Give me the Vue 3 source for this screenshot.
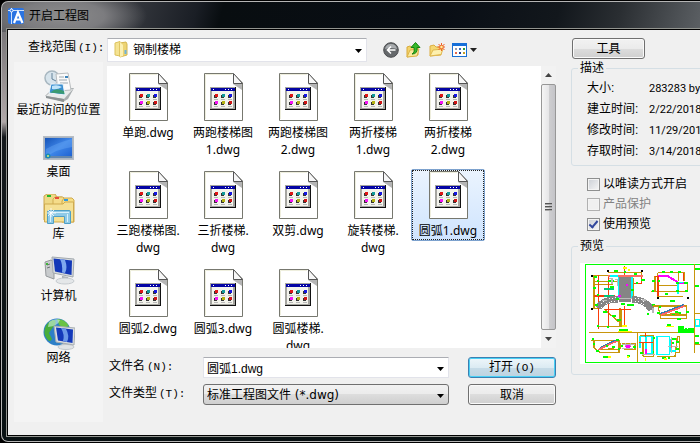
<script setup>
import {ref} from "vue";

const folder = ref("钢制楼梯");
const fileName = ref("圆弧1.dwg");
const fileType = ref("标准工程图文件 (*.dwg)");
const selected = ref("圆弧1.dwg");

const places = [
  {icon: "recent", name: "最近访问的位置"},
  {icon: "desktop", name: "桌面"},
  {icon: "library", name: "库"},
  {icon: "computer", name: "计算机"},
  {icon: "network", name: "网络"}
]

// each file name is split in the lines that fit under its icon
const files = [
  ["单跑.dwg"],
  ["两跑楼梯图", "1.dwg"],
  ["两跑楼梯图", "2.dwg"],
  ["两折楼梯", "1.dwg"],
  ["两折楼梯", "2.dwg"],
  ["三跑楼梯图.", "dwg"],
  ["三折楼梯.", "dwg"],
  ["双剪.dwg"],
  ["旋转楼梯.", "dwg"],
  ["圆弧1.dwg"],
  ["圆弧2.dwg"],
  ["圆弧3.dwg"],
  ["圆弧楼梯.", "dwg"]
]

const details = [
  {label: "大小:", value: "283283 bytes"},
  {label: "建立时间:", value: "2/22/2018"},
  {label: "修改时间:", value: "11/29/2017"},
  {label: "存取时间:", value: "3/14/2018"}
]

const readOnly = ref(false);
const usePreview = ref(true);

function selectFile(file) {
  selected.value = file.join("");
  fileName.value = selected.value;
}
</script>

<template>
  <div class="window">
    <header class="title-bar">
      <svg class="app-icon" width="16" height="16" viewBox="0 0 16 16">
        <rect width="16" height="16" rx="2" fill="#2b74e2"/>
        <path d="M0 2.500H16M3.500 0V16" stroke="#cfe2fb"/>
        <circle cx="3.500" cy="2.500" r="1.500" fill="#2b74e2" stroke="#fff"/>
        <path d="M6 15L10 4.500L14.500 15M7.500 11.500H13" stroke="#fff" stroke-width="2.200" fill="none"/>
      </svg>
      <h1>开启工程图</h1>
    </header>

    <main class="body">
      <div class="look-in">
        <label for="folder">查找范围<span class="half">(I):</span></label>
        <div class="field folder-field">
          <svg class="folder-icon" width="14" height="17" viewBox="0 0 14 17">
            <path d="M1 2L6 0.500V15L1 14Z" fill="#f5e392" stroke="#dcc25c"/>
            <path d="M6 2L12 1L13 3V14L6 16Z" fill="#edd474" stroke="#d4b650"/>
            <path d="M6 1V16L9 15V4Z" fill="#fbf0b4"/>
            <path d="M11.500 9V13" stroke="#6eb4dc" stroke-width="2"/>
          </svg>
          <select id="folder" v-model="folder">
            <option>钢制楼梯</option>
          </select>
          <svg class="arrow" width="7" height="4" viewBox="0 0 7 4"><path d="M0 0H7L3.500 4Z"/></svg>
        </div>
        <div class="tools">
          <button aria-label="后退">
            <svg width="16" height="16" viewBox="0 0 16 16">
              <circle cx="8" cy="8" r="7.300" fill="#65686b" stroke="#4c4e50"/>
              <path d="M2 7Q3 2 8 2T14 7Q8 5 2 7Z" fill="#a9acaf"/>
              <path d="M12.500 8H4.500M8 4.500L4.500 8L8 11.500" stroke="#fff" stroke-width="1.600" fill="none"/>
            </svg>
          </button>
          <button aria-label="向上">
            <svg width="16" height="16" viewBox="0 0 16 16">
              <path d="M1 15V5L4 4L6 5.500H12V13Z" fill="#f3d36a" stroke="#d9aa3b"/>
              <path d="M1 15L4 8L13 7L11 14Z" fill="#fbe99c" stroke="#dcb349"/>
              <path d="M6 12Q9 11 8 5.500H5L9.500 0.500L14 5.500H11Q12 12 6 12Z" fill="#35b829" stroke="#15800f"/>
            </svg>
          </button>
          <button aria-label="新建文件夹">
            <svg width="16" height="16" viewBox="0 0 16 16">
              <path d="M1 14V4L5 3L7 5H12V13Z" fill="#f5d873" stroke="#dcae43"/>
              <path d="M1 14L4 8L14 7L12 12.500Z" fill="#fdf0ae" stroke="#dfb850"/>
              <path d="M12.500 1V9M8.500 5H16M9.500 2L15.500 8M15.500 2L9.500 8" stroke="#f0612b"/>
              <circle cx="12.500" cy="5" r="1.800" fill="#fff0a0" stroke="#ef6b2b"/>
            </svg>
          </button>
          <button class="view-button" aria-label="视图">
            <svg width="26" height="16" viewBox="0 0 26 16">
              <rect x="0.500" y="1.500" width="14" height="13" fill="#fff" stroke="#1a70d2"/>
              <path d="M0 1H15V4H0Z" fill="#176fd8"/>
              <path d="M3 6h2v2h-2z" fill="#99a"/>
              <path d="M7 6h2v2h-2z" fill="#3c6cba"/>
              <path d="M11 6h2v2h-2z" fill="#2a9b3c"/>
              <path d="M3 10h2v2h-2z" fill="#e66a4c"/>
              <path d="M7 10h2v2h-2z" fill="#1b3f94"/>
              <path d="M11 10h2v2h-2z" fill="#c7a021"/>
              <path d="M18 6H25L21.500 10Z" fill="#222"/>
            </svg>
          </button>
        </div>
      </div>

      <nav class="places">
        <button v-for="place in places" :key="place.icon">
          <svg width="32" height="32" viewBox="0 0 32 32">
            <g v-if="place.icon === 'recent'">
              <path d="M2 26L9 19L31 18L25 29L20 32Z" fill="#a9aeb0"/>
              <path d="M3 26L9 20L30 19L21 29Z" fill="#e9ebeb"/>
              <path d="M3 26L21 29V32L3 28Z" fill="#8d9294"/>
              <circle cx="9" cy="8" r="7" fill="#d7e4ec" stroke="#a8b7c0" stroke-width="1.500"/>
              <path d="M9 3V9L13 11" stroke="#64839a" fill="none"/>
              <path d="M13 4L25 3L28 20L15 21Z" fill="#fafafa" stroke="#b9bdbf"/>
              <path d="M16 7H21M16 10H24M17 13H25" stroke="#9da9b0"/>
              <path d="M22 7h3" stroke="#3c83b9" stroke-width="2"/>
              <path d="M8 14L20 14L22 25L6 23Z" fill="#3b8fd0" stroke="#eef5f9"/>
              <path d="M8 22Q13 17 21 21L21.500 24L7 22.500Z" fill="#3a9a71"/>
              <path d="M9 16Q14 14 19 17Q14 20 9 19Z" fill="#bfe4fa"/>
            </g>
            <g v-else-if="place.icon === 'desktop'">
              <defs>
                <linearGradient id="desk" x2="1" y2="1">
                  <stop offset="0" stop-color="#1654b8"/>
                  <stop offset=".5" stop-color="#3f86e8"/>
                  <stop offset="1" stop-color="#1c5fd0"/>
                </linearGradient>
              </defs>
              <rect x="0.500" y="4.500" width="30" height="23" fill="#a9b4c2" stroke="#b7bdc4"/>
              <rect x="2" y="6" width="27" height="20" fill="url(#desk)"/>
              <path d="M3 17Q16 10 29 7V15Q14 17 3 25Z" fill="#6baaf5" opacity=".4"/>
              <path d="M2 24H29V26H2Z" fill="#6386ad"/>
              <circle cx="5" cy="24" r="2.500" fill="#188bb3"/>
              <circle cx="5" cy="24" r="1" fill="#d9ed75"/>
            </g>
            <g v-else-if="place.icon === 'library'">
              <path d="M1 26V2L4 0H12L14 3H19V27Z" fill="#eed886" stroke="#c9a64f"/>
              <path d="M10 27V5L12 3H20L22 5H25V28Z" fill="#f5dc8a" stroke="#d1ac52"/>
              <path d="M19 28V7L21 4H29L31 6V28Z" fill="#f6dd83" stroke="#cfaa4e"/>
              <path d="M4 2h4" stroke="#25b92d" stroke-width="2"/>
              <path d="M12 4h4" stroke="#e84b37" stroke-width="2"/>
              <path d="M21 6h4" stroke="#329be0" stroke-width="2"/>
              <path d="M1.500 10H20L22 8H30.500V28H1.500Z" fill="#f5e094" stroke="#cfaa4e"/>
              <path d="M4.500 29.500V18Q4.500 16.500 6 16.500H26Q27.500 16.500 27.500 18V29.500H21.500V22.500H10.500V29.500Z" fill="#8fcae6" stroke="#4f9fc6"/>
              <path d="M7 18.500H26M7.500 20V28M24.500 20V28" stroke="#d8f1fb"/>
              <path d="M8 14V23M4 19H13M5 16L11 22M11 16L5 22" stroke="#fff" stroke-width=".8"/>
            </g>
            <g v-else-if="place.icon === 'computer'">
              <path d="M2 6L8 4L11 6V23L3 20Z" fill="#c8cbcd" stroke="#95999c"/>
              <path d="M4 9L7 8M4 12L7 11" stroke="#6c7174"/>
              <path d="M3 8h2" stroke="#3fb438" stroke-width="2"/>
              <path d="M19 20L25 21L26 25H19Z" fill="#a4abb0"/>
              <ellipse cx="22" cy="25" rx="9" ry="3" fill="#e4e7e9" stroke="#c6cbcf"/>
              <path d="M9 1L31 3L30 21L10 17Z" fill="#d6dadd" stroke="#a2a9ae"/>
              <path d="M10.500 2.500L29 4.500L28.500 19L12 15.500Z" fill="#1338b8"/>
              <path d="M17 3L22 4Q25 12 22 17L19 16.500Q20 9 17 3Z" fill="#7ea7ed"/>
            </g>
            <g v-else>
              <circle cx="14" cy="14" r="13.500" fill="#2d7fc7"/>
              <path d="M2 10Q5 2 12 2Q14 6 10 9L6 15L9 21Q7 25 4 21Q0 16 2 10Z" fill="#48ad3b"/>
              <path d="M14 1Q22 1 26 8L21 10L16 7Z" fill="#69c245"/>
              <path d="M6 4Q11 0 17 2Q15 8 5 9Z" fill="#d5f4e5" opacity=".6"/>
              <path d="M20 25H26V29H20Z" fill="#a4abb0"/>
              <ellipse cx="23" cy="29" rx="8" ry="2.500" fill="#e1e4e6" stroke="#c2c7cb"/>
              <path d="M11 8L32 10L31 27L13 24Z" fill="#dadee0" stroke="#a7adb1"/>
              <path d="M13 9.500L30 11.500L29.500 25L15 22.500Z" fill="#1439ba"/>
              <path d="M18 10L23 11Q27 18 24 24L20 23Q22 17 18 10Z" fill="#6c98e8"/>
            </g>
          </svg>
          <span>{{ place.name }}</span>
        </button>
      </nav>

      <section class="center">
        <div class="file-pane">
          <div class="files">
            <button v-for="file in files" :key="file.join('')"
                    :class="file.join('') === selected ? 'file file-selected' : 'file'" @click="selectFile(file)">
              <svg width="39" height="48" viewBox="0 0 39 48">
                <path d="M0.500 0.500H29L38.500 10V47.500H0.500Z" fill="#fff" stroke="#77786f"/>
                <path d="M1.500 46V1.500H28" fill="none" stroke="#eeeedd"/>
                <path d="M29 11H38V17Z" fill="#b5b5b5"/>
                <path d="M29.500 0.500V10.500H38.500Z" fill="#f7f7f7" stroke="#555"/>
                <rect x="6" y="14" width="26" height="23" fill="#111"/>
                <rect x="6" y="14" width="25" height="22" fill="#a5a5a0"/>
                <rect x="8" y="18" width="21" height="17" fill="#f3f3ec"/>
                <rect x="7" y="15" width="24" height="3" fill="#0404a4"/>
                <path d="M9 16.500h1M21 16.500h1M24 16.500h1M27 16.500h1" stroke="#fff"/>
                <path d="M10 26.500h4M17 26.500h4M24 26.500h4M10 33.500h4M17 33.500h4M24 33.500h4" stroke="#b7b7b7"/>
                <path d="M10 22h3v3h-3zM17 22h3v3h-3zM24 22h3v3h-3zM10 29h3v3h-3zM17 29h3v3h-3zM24 29h3v3h-3z" fill="#333"/>
                <path d="M11 21h3v3h-3z" fill="#df1616"/>
                <path d="M18 21h3v3h-3z" fill="#129a9a"/>
                <path d="M25 21h3v3h-3z" fill="#1616df"/>
                <path d="M11 28h3v3h-3z" fill="#f316f3"/>
                <path d="M18 28h3v3h-3z" fill="#b3b312"/>
                <path d="M25 28h3v3h-3z" fill="#cd1616"/>
              </svg>
              <span v-for="line in file">{{ line }}</span>
            </button>
          </div>
          <div class="scroll-bar">
            <svg width="7" height="4" viewBox="0 0 7 4"><path d="M0 4H7L3.500 0Z"/></svg>
            <div class="thumb"><i></i><i></i><i></i></div>
            <svg width="7" height="4" viewBox="0 0 7 4"><path d="M0 0H7L3.500 4Z"/></svg>
          </div>
        </div>

        <form class="file-form" @submit.prevent>
          <label for="file-name">文件名<span class="half">(N):</span></label>
          <div class="field">
            <input id="file-name" type="text" v-model="fileName">
            <svg class="arrow" width="7" height="4" viewBox="0 0 7 4"><path d="M0 0H7L3.500 4Z"/></svg>
          </div>
          <button class="push push-default">打开<span class="half">(O)</span></button>
          <label for="file-type">文件类型<span class="half">(T):</span></label>
          <div class="field type-field">
            <select id="file-type" v-model="fileType">
              <option>标准工程图文件 (*.dwg)</option>
            </select>
            <svg class="arrow" width="7" height="4" viewBox="0 0 7 4"><path d="M0 0H7L3.500 4Z"/></svg>
          </div>
          <button class="push" type="button">取消</button>
        </form>
      </section>

      <aside class="side">
        <button class="push tool-button">工具</button>
        <fieldset>
          <legend>描述</legend>
          <dl>
            <div v-for="detail in details" :key="detail.label">
              <dt>{{ detail.label }}</dt>
              <dd>{{ detail.value }}</dd>
            </div>
          </dl>
        </fieldset>
        <div class="options">
          <label><input type="checkbox" v-model="readOnly">以唯读方式开启</label>
          <label class="disabled"><input type="checkbox" disabled>产品保护</label>
          <label><input type="checkbox" v-model="usePreview">使用预览</label>
        </div>
        <fieldset class="preview">
          <legend>预览</legend>
          <svg width="180" height="101" viewBox="0 0 180 101" shape-rendering="crispEdges">
            <rect width="180" height="101" fill="#fff"/>
            <!-- drawing is laid out on a grid three times finer than the pixels -->
            <g transform="translate(-5 -7) scale(.3333)" fill="none" stroke-width="4">
              <path d="M540 25H31V319H540" stroke="#0f0" stroke-width="3"/>
              <path d="M42 230H358M187 230V319M358 25V290M358 172H400M358 265H400" stroke="#c8960c"/>
              <!-- main stair plan -->
              <path d="M55 58H130M57 58V158H70M57 76H130M57 85H115M99 50H200V60M70 211H140V160M88 160L140 205M175 65V130M135 155V213" stroke="#c8960c"/>
              <path d="M71 58V218M100 58V216M149 30V60M149 150V213M57 120H120M90 160H168M178 82H200M200 60V80" stroke="#fa3c0a"/>
              <path d="M98 60H203" stroke="#ff6e64" stroke-width="6"/>
              <path d="M131 62V130M171 62V130M130 60H106" stroke="#0ff"/>
              <path d="M86 98H118M86 120H118" stroke="#00c878" stroke-width="6"/>
              <rect x="133" y="62" width="36" height="76" fill="#858585"/>
              <path d="M130 130Q90 128 68 155" stroke="#858585" stroke-width="20"/>
              <path d="M172 130Q210 130 230 161" stroke="#858585" stroke-width="20"/>
              <path d="M122 126Q94 127 72 148M180 126Q205 129 226 154" stroke="#fff" stroke-width="3" stroke-dasharray="3 6"/>
              <path d="M121 135Q97 137 76 158M181 135Q202 138 222 162" stroke="#fff" stroke-width="3" stroke-dasharray="3 6"/>
              <path d="M133 127H171" stroke="#bbb"/>
              <path d="M130 121h7M154 87h5" stroke="#f0f" stroke-width="5"/>
              <path d="M48 59h6M96 45h6M198 45h6M48 158h6M246 125h6M336 125h6" stroke="#000" stroke-width="6"/>
              <path d="M57 62h9M54 95h8M66 76h7M66 116h7M60 147h8M98 75h18M105 92h12M118 44h12M146 49h8M177 53h10M199 71h12M184 82h6M168 103h8M85 168h10M110 180h12M125 191h12M65 210h8M95 213h8M124 128h9M138 144h12M155 148h22M231 148h8M215 175h8" stroke="#0f0" stroke-width="6"/>
              <path d="M102 68h9v16M119 70h8v20M82 133h15M201 132h12M234 155v17" stroke="#b9b9b9"/>
              <path d="M144 35h12M158 42h8M142 210h14" stroke="#ff0" stroke-width="6"/>
              <path d="M132 222h28" stroke="#0f0" stroke-width="6"/>
              <path d="M130 227h40M272 211h24" stroke="#ff0"/>
              <!-- section and elevation -->
              <path d="M248 50H327V76M248 50V122H325M240 60V106M227 106H338V77M250 88H308M235 150H334V188H258L249 150M262 177H334M310 48V75" stroke="#c8960c"/>
              <path d="M248 61H280L313 82H328" stroke="#f0f" stroke-width="6"/>
              <path d="M249 62V120M240 62H252M326 52V76" stroke="#fa3c0a"/>
              <path d="M309 79V113M309 80H323" stroke="#0ff"/>
              <path d="M256 173L326 146" stroke="#347caf"/>
              <path d="M258 177L328 150" stroke="#ff6464" stroke-width="5"/>
              <path d="M260 48h10M285 48h8M310 48h8M231 76h8M230 104h7M250 76h6M303 81h8M328 80h12M270 114h10M303 104h8M330 104h8M285 135h15M252 154h6M247 172h7M300 168h8M292 173h8M309 170h8M305 188h12M276 207h12M334 167h7" stroke="#0f0" stroke-width="6"/>
              <path d="M285 173H312" stroke="#c8960c" stroke-width="5"/>
              <path d="M310 210H326V215H358V230H310Z" fill="#0f0"/>
              <path d="M328 218h3M337 218h3" stroke="#fff"/>
              <!-- details in the lower row -->
              <path d="M48 253H132V290H75L57 276V253M75 280H128M137 260V279M142 262H180V280H148M195 240H236V301H204M204 260V301M245 301H300L307 242H314V290H301" stroke="#c8960c"/>
              <path d="M76 274L130 249" stroke="#347caf"/>
              <path d="M70 281L132 252" stroke="#ff6464" stroke-width="5"/>
              <path d="M100 278H118" stroke="#c8960c" stroke-width="6"/>
              <path d="M50 248h6M54 264h6M63 284h8M92 269h7M112 273h8M124 252h8M129 279h7M84 303h14M137 271h7M174 272h9M156 299h8M233 246h7M228 289h8M262 307h10M278 307h8M290 248h12M290 262h8M304 258h9M304 278h9M196 290h8" stroke="#0f0" stroke-width="6"/>
              <path d="M150 270H168M154 276H165" stroke="#f0f" stroke-width="8"/>
              <path d="M140 265h40M140 277h35M151 260v10M167 260v10" stroke="#b9b9b9"/>
              <path d="M195 241H231V292H213M195 241V277M213 241V292M246 241H285M246 241V295H284V241M288 250V285H304" stroke="#0ff"/>
              <path d="M213 278V294" stroke="#f0f" stroke-width="5"/>
              <path d="M192 260H234M211 232V242" stroke="#fa3c0a"/>
              <path d="M290 244V292M280 271H310M200 295H240" stroke="#b9b9b9"/>
              <path d="M290 252V276" stroke="#ff6e64" stroke-width="5"/>
              <path d="M100 304h8M155 303h8M212 306v8M266 309h10" stroke="#ff0" stroke-width="5"/>
              <path d="M360 40h15M360 90h12M360 240h12M360 262h12" stroke="#0f0" stroke-width="6"/>
              <path d="M362 190h13v20h-13z" stroke="#0ff"/>
            </g>
          </svg>
        </fieldset>
      </aside>
    </main>
  </div>
</template>

<style>
body {
  margin: 0;
  background: #000;
}
</style>

<style scoped>
.window {
  box-sizing: border-box;
  height: calc(100vh - 2px);
  display: flex;
  flex-direction: column;
  margin: 1px 0 1px 1px;
  padding: 0 0 5px 5px;
  overflow: hidden;
  font: 12px/16px "Liberation Sans", "Noto Sans CJK SC", sans-serif;
  color: #000;
  border: 1px solid #b4b4b4;
  border-right: 0;
  border-radius: 7px 0 0 7px;
  background: radial-gradient(ellipse 85px 30px at 60px 14px, #8c8c8c 0, #7c7c7f 50%, transparent 100%) no-repeat 0 0 / 100% 30px,
    linear-gradient(105deg, #55565a 0, #33363c 130px, #1a1e25 190px, #080d10 215px, #090e15 430px, #12171c 540px, #2a2e32 600px, #5c6064 100%) no-repeat 0 0 / 100% 30px,
    linear-gradient(#67676b 0, #b0a8a8 120px, #15191c 135px, #081012 100%);
}

button, input, select {
  font: inherit;
  color: inherit;
  margin: 0;
}

.half {
  font: 11px/16px "Liberation Mono", monospace;
  margin-left: 2px;
}

.title-bar {
  display: flex;
  align-items: center;
  flex: 0 0 27px;
  gap: 5px;
  padding-left: 1px;
}

h1 {
  margin: 0;
  font-size: 12px;
  font-weight: normal;
}

.body {
  flex: 1;
  min-height: 0;
  display: grid;
  grid-template-columns: 89px minmax(0, 449px) minmax(128px, 1fr);
  grid-template-rows: 24px minmax(0, 1fr);
  column-gap: 4px;
  padding: 8px 0 13px 6px;
  background: #f0f0f0;
  border: 1px solid #000;
  border-right: 0;
  box-shadow: 0 0 0 1px #92948f;
}

.look-in {
  grid-column: 1 / 3;
  display: flex;
  align-items: stretch;
}

.look-in label {
  box-sizing: border-box;
  flex: 0 0 93px;
  padding: 1px 0 0 14px;
}

.field {
  position: relative;
  display: flex;
}

.field input, .field select {
  box-sizing: border-box;
  appearance: none;
  width: 100%;
  height: 100%;
  padding: 0 20px 0 3px;
  border: 1px solid #e2e3ea;
  border-top-color: #abadb3;
  border-radius: 1px;
  background: #fff;
  outline: none;
}

.folder-field {
  flex: 0 1 260px;
}

.folder-field select {
  padding-left: 25px;
}

.folder-icon {
  position: absolute;
  left: 7px;
  top: 3px;
}

.arrow {
  position: absolute;
  right: 5px;
  top: 50%;
  margin-top: -1px;
  pointer-events: none;
}

.type-field select {
  border: 1px solid #707070;
  border-radius: 3px;
  background: linear-gradient(#f2f2f2, #ebebeb 50%, #dddddd 50%, #cfcfcf);
  font-family: "DejaVu Sans", "Noto Sans CJK SC", sans-serif;
}

.tools {
  display: flex;
  align-items: center;
  gap: 7px;
  margin-left: 16px;
}

.tools button {
  display: flex;
  padding: 0;
  border: 0;
  background: none;
}

.places {
  display: flex;
  flex-direction: column;
  background: #f4f4f4;
}

.places button {
  display: flex;
  flex-direction: column;
  align-items: center;
  padding: 8px 0 6px;
  border: 0;
  background: none;
  white-space: nowrap;
}

.center {
  display: flex;
  flex-direction: column;
  min-height: 0;
  padding: 4px 0 16px;
}

.file-pane {
  flex: 1;
  min-height: 0;
  display: flex;
  background: #fff;
}

.files {
  flex: 1;
  display: grid;
  grid-template-columns: repeat(auto-fill, 74px);
  grid-auto-rows: 98px;
  column-gap: 1px;
  align-items: start;
  padding: 5px 0 0 4px;
  overflow: hidden;
}

.file {
  display: flex;
  flex-direction: column;
  align-items: center;
  padding: 1px 0;
  border: 1px solid transparent;
  border-radius: 2px;
  background: none;
  font-family: "Noto Sans", "Noto Sans CJK SC", sans-serif;
  line-height: 17px;
  white-space: nowrap;
}

.file svg {
  margin-bottom: 3px;
}

.file-selected {
  border-color: #7da2ce;
  background: linear-gradient(#ebf4fe, #cfe4fe);
  outline: 1px dotted #222;
  outline-offset: -2px;
}

.scroll-bar {
  flex: 0 0 15px;
  box-sizing: border-box;
  display: flex;
  flex-direction: column;
  align-items: center;
  gap: 7px;
  padding: 7px 0;
  background: #f2f2f2;
  fill: #444;
}

.thumb {
  flex: 1;
  align-self: stretch;
  display: flex;
  flex-direction: column;
  align-items: center;
  justify-content: center;
  gap: 1px;
  border: 1px solid #979797;
  border-radius: 2px;
  background: linear-gradient(90deg, #f5f5f5, #e6e6e8 50%, #cfcfd1 50%, #c4c4c8);
}

.thumb i {
  width: 7px;
  height: 2px;
  background: linear-gradient(#555 50%, #aaa 50%);
}

.file-form {
  display: grid;
  grid-template-columns: 94px minmax(0, 246px) 88px;
  grid-auto-rows: 21px;
  row-gap: 6px;
  padding: 9px 0 1px 2px;
}

.file-form label {
  padding-top: 1px;
}

.file-form .push {
  margin-left: 19px;
  width: 88px;
}

.push {
  box-sizing: border-box;
  height: 21px;
  padding: 0;
  border: 1px solid #707070;
  border-radius: 3px;
  background: linear-gradient(#f2f2f2, #ebebeb 50%, #dddddd 50%, #cfcfcf);
  box-shadow: inset 0 0 0 1px #fafafa;
}

.push-default {
  border-color: #3c7fb1;
  background: linear-gradient(#eef6fa, #dcebf3 50%, #c7dce8 50%, #bdd3e0);
  box-shadow: inset 0 0 0 1px #48d0f5;
}

.side {
  grid-column: 3;
  grid-row: 1 / 3;
  display: flex;
  flex-direction: column;
  margin-left: 11px;
  min-width: 0;
  white-space: nowrap;
  overflow: hidden;
}

.tool-button {
  width: 73px;
  margin-left: 1px;
}

fieldset {
  min-width: 0;
  margin: 1px -6px 0 0;
  padding: 2px 0 3px 15px;
  border: 1px solid #d5dfe5;
  border-radius: 3px;
}

legend {
  margin-left: -9px;
  padding: 0 2px;
}

dl {
  margin: 0;
}

dl div {
  display: flex;
  line-height: 21px;
}

dt {
  flex: 0 0 62px;
}

dd {
  margin: 0;
  font-family: Roboto, sans-serif;
  font-size: 11px;
}

.options {
  margin: 8px 0 3px 16px;
}

.options label {
  display: flex;
  align-items: center;
  gap: 3px;
  height: 20px;
}

.options .disabled {
  color: #838383;
}

.options input {
  appearance: none;
  box-sizing: border-box;
  width: 13px;
  height: 13px;
  border: 1px solid #8e8f8f;
  background: linear-gradient(135deg, #cbcfd5, #f6f6f6);
  box-shadow: inset 0 0 0 1px #f4f4f4;
}

.options input:disabled {
  border-color: #b1b1b1;
  background: #f0f0f0;
}

.options input:checked::after {
  content: "";
  display: block;
  width: 3px;
  height: 7px;
  margin: 0 0 0 3px;
  border: solid #31479d;
  border-width: 0 2px 2px 0;
  transform: rotate(40deg);
}

.preview {
  padding: 9px 0 10px 8px;
}

.preview legend {
  margin-left: -2px;
}

.preview svg {
  display: block;
}
</style>
